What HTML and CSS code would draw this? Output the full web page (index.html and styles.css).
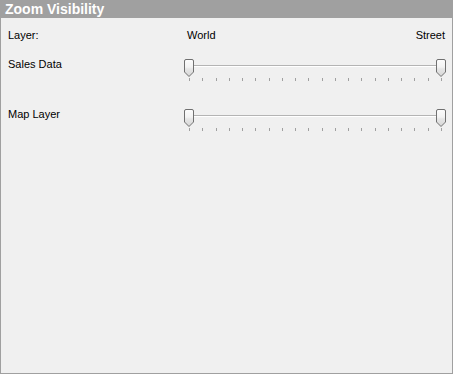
FILE: index.html
```html
<!DOCTYPE html>
<html>
<head>
<meta charset="utf-8">
<link rel="stylesheet" href="styles.css">
</head>
<body>
<div class="panel">
  <div class="header">Zoom Visibility</div>
  <div class="content">
    <div class="row top-row">
      <div class="label">Layer:</div>
      <div class="scale-labels"><span>World</span><span>Street</span></div>
    </div>
    <div class="row slider-row">
      <div class="label">Sales Data</div>
      <div class="slider">
        <div class="track"></div>
        <svg class="thumb thumb-left" width="10" height="18" viewBox="0 0 10 18"><defs><linearGradient id="g1" x1="0" y1="0" x2="0" y2="1"><stop offset="0" stop-color="#fcfcfc"/><stop offset="0.45" stop-color="#f3f3f3"/><stop offset="0.55" stop-color="#e6e6e6"/><stop offset="1" stop-color="#d6d6d6"/></linearGradient></defs><path d="M2 0.5 H8 Q9.5 0.5 9.5 2 V13 L5 17.5 L0.5 13 V2 Q0.5 0.5 2 0.5 Z" fill="url(#g1)" stroke="#707070"/></svg>
        <svg class="thumb thumb-right" width="10" height="18" viewBox="0 0 10 18"><path d="M2 0.5 H8 Q9.5 0.5 9.5 2 V13 L5 17.5 L0.5 13 V2 Q0.5 0.5 2 0.5 Z" fill="url(#g1)" stroke="#707070"/></svg>
        <div class="ticks"><i></i><i></i><i></i><i></i><i></i><i></i><i></i><i></i><i></i><i></i><i></i><i></i><i></i><i></i><i></i><i></i><i></i><i></i><i></i><i></i></div>
      </div>
    </div>
    <div class="row slider-row">
      <div class="label">Map Layer</div>
      <div class="slider">
        <div class="track"></div>
        <svg class="thumb thumb-left" width="10" height="18" viewBox="0 0 10 18"><path d="M2 0.5 H8 Q9.5 0.5 9.5 2 V13 L5 17.5 L0.5 13 V2 Q0.5 0.5 2 0.5 Z" fill="url(#g1)" stroke="#707070"/></svg>
        <svg class="thumb thumb-right" width="10" height="18" viewBox="0 0 10 18"><path d="M2 0.5 H8 Q9.5 0.5 9.5 2 V13 L5 17.5 L0.5 13 V2 Q0.5 0.5 2 0.5 Z" fill="url(#g1)" stroke="#707070"/></svg>
        <div class="ticks"><i></i><i></i><i></i><i></i><i></i><i></i><i></i><i></i><i></i><i></i><i></i><i></i><i></i><i></i><i></i><i></i><i></i><i></i><i></i><i></i></div>
      </div>
    </div>
  </div>
</div>
</body>
</html>
```
FILE: styles.css
```css
html, body {
  margin: 0;
  padding: 0;
  background: #f0f0f0;
}
.panel {
  width: 453px;
  height: 374px;
  box-sizing: border-box;
  border: 1px solid #a0a0a0;
  border-top: none;
  background: #f0f0f0;
  font-family: "Liberation Sans", Arial, sans-serif;
  font-size: 11px;
  color: #000;
}
.header {
  height: 18px;
  margin: 0 -1px;
  background: #a0a0a0;
  color: #fff;
  font-weight: bold;
  font-size: 14px;
  line-height: 18px;
  padding-left: 5px;
}
.content {
  padding-left: 7px;
}
.row {
  display: grid;
  grid-template-columns: 176px 262px;
}
.label {
  line-height: 14px;
}
.top-row {
  margin-top: 10px;
  height: 29px;
}
.scale-labels {
  display: flex;
  justify-content: space-between;
  line-height: 14px;
  padding-left: 3px;
  padding-right: 1px;
}
.slider-row {
  height: 50px;
}
.slider {
  position: relative;
  margin-top: 2px;
  height: 24px;
}
.track {
  margin: 6px 9px 0 6px;
  border-top: 1px solid #b4b4b4;
  border-bottom: 1px solid #ffffff;
  height: 0;
}
.thumb {
  position: absolute;
  top: 0;
}
.thumb-left { left: 0; }
.thumb-right { right: 0; }
.ticks {
  display: flex;
  justify-content: space-between;
  margin: 11px 0 0 0;
  padding: 0 4px 0 5px;
}
.ticks i {
  display: block;
  width: 1px;
  height: 3px;
  background: #a0a0a0;
}
```
